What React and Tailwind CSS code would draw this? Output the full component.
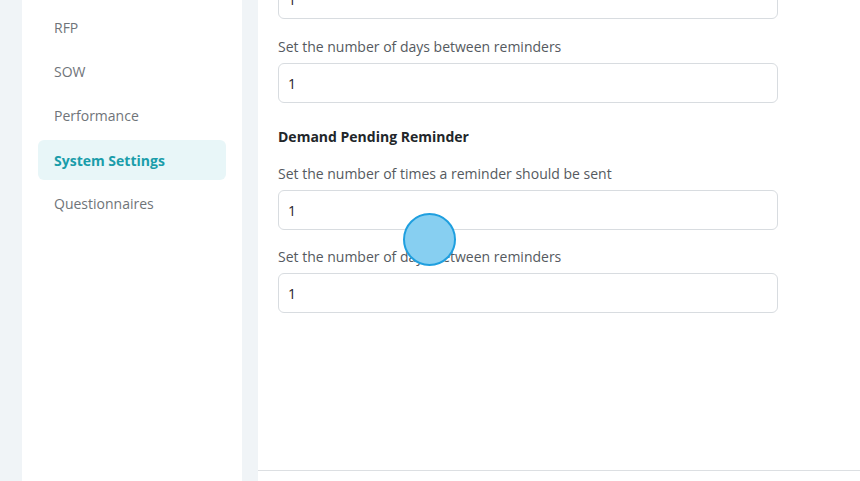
import React from 'react'

const navItems = ['RFP', 'SOW', 'Performance', 'System Settings', 'Questionnaires']

const Field = ({ label, value, className = '' }) => (
  <div className={className}>
    <label className="block text-[14px] leading-5 text-[#555a60]">{label}</label>
    <div className="mt-[6px] flex h-10 w-[500px] items-center rounded-md border border-[#d8dce0] bg-white px-[9px] text-[14px] text-[#1f2328]">
      {value}
    </div>
  </div>
)

const App = () => {
  return (
    <div className="relative flex h-[481px] w-[860px] overflow-hidden bg-[#f0f4f7] font-['Open_Sans',sans-serif]">
      <aside className="ml-[22px] w-[220px] bg-white px-4 pt-[8px]">
        <ul className="flex flex-col gap-1">
          {navItems.map((item) => {
            const active = item === 'System Settings'
            return (
              <li
                key={item}
                className={
                  active
                    ? 'flex h-10 items-center rounded-md bg-[#e8f6f8] px-4 text-[14px] font-bold text-[#1a9daa]'
                    : 'flex h-10 items-center px-4 pb-[2px] text-[14px] text-[#6f7479]'
                }
              >
                {item}
              </li>
            )
          })}
        </ul>
      </aside>

      <main className="ml-4 flex flex-1 flex-col bg-white">
        <div className="flex-1 px-5 pt-0">
          <div className="-mt-[21px] flex h-10 w-[500px] items-center rounded-md border border-[#d8dce0] px-[9px] text-[14px] text-[#1f2328]">
            1
          </div>
          <Field className="mt-[18px]" label="Set the number of days between reminders" value="1" />
          <h3 className="mt-[24px] text-[14px] font-bold leading-5 text-[#22262a]">Demand Pending Reminder</h3>
          <Field className="mt-[17px]" label="Set the number of times a reminder should be sent" value="1" />
          <Field className="mt-[17px]" label="Set the number of days between reminders" value="1" />
        </div>
        <div className="h-[11px] border-t border-[#dcdfe2]" />
      </main>

      <div className="absolute left-[403px] top-[213px] h-[53px] w-[53px] rounded-full border-2 border-[#1f9fdf] bg-[#87cff1]" />
    </div>
  )
}

export default App
